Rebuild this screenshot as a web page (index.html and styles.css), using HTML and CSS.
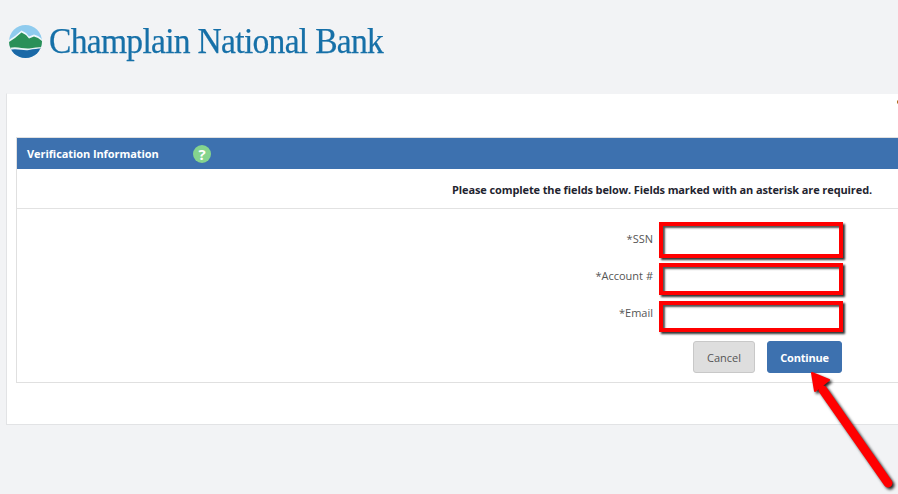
FILE: index.html
```
<!DOCTYPE html>
<html lang="en">
<head>
<meta charset="utf-8">
<title>Champlain National Bank</title>
<link rel="stylesheet" href="styles.css">
</head>
<body>
<header class="brand">
  <svg class="brand-mark" viewBox="0 0 33 33" width="33" height="33" aria-hidden="true">
    <defs><clipPath id="disc"><circle cx="16.5" cy="16.5" r="16.5"/></clipPath></defs>
    <g clip-path="url(#disc)">
      <rect width="33" height="33" fill="#8fcbee"/>
      <path d="M0 15 L6 11 L12.5 5.5 L17 8 L20 11.5 L25 9.5 L29 11 L33 14 V26 H0Z" fill="#fff" opacity=".85"/>
      <path d="M0 17 L6 13 L12.5 7.5 L17 10 L20 13.5 L25 11.5 L29 13 L33 16 V24 H0Z" fill="#2a9058"/>
      <path d="M0 23 C8 21 14 24 20 23.5 C25 23 29 22 33 22 V26 H0Z" fill="#e9f3f5"/>
      <path d="M0 25 C8 23 14 26 20 25 C25 24 29 23.5 33 23.5 V33 H0Z" fill="#1a68a6"/>
    </g>
  </svg>
  <span class="brand-name">Champlain National Bank</span>
</header>
<main class="card">
  <span class="dot"></span>
  <section class="panel">
    <div class="panel-head">
      <h1 class="panel-title">Verification Information</h1>
      <span class="help">?</span>
    </div>
    <p class="notice">Please complete the fields below. Fields marked with an asterisk are required.</p>
    <form class="fields">
      <div class="row row-ssn">
        <label class="label label-ssn" for="ssn">*SSN</label>
        <input class="input input-ssn" id="ssn" type="text">
      </div>
      <div class="row row-account">
        <label class="label label-low" for="acct">*Account #</label>
        <input class="input input-account" id="acct" type="text">
      </div>
      <div class="row row-email">
        <label class="label label-low" for="email">*Email</label>
        <input class="input input-email" id="email" type="text">
      </div>
      <div class="actions">
        <button class="btn btn-cancel" type="button">Cancel</button>
        <button class="btn btn-continue" type="button">Continue</button>
      </div>
    </form>
  </section>
  <svg class="arrow" viewBox="0 0 90 118" width="90" height="118" aria-hidden="true">
    <path d="M79 113 L14 20" stroke="#f00" stroke-width="9" stroke-linecap="round" fill="none"/>
    <path d="M3 3 L20 10 L6 21Z" fill="#f00" stroke="#f00" stroke-width="2" stroke-linejoin="round"/>
  </svg>
</main>
</body>
</html>
```
FILE: styles.css
```
* { box-sizing: border-box; }
html, body { margin: 0; height: 494px; overflow: hidden; }
body { background: #f2f3f5; font-family: "Open Sans", "Liberation Sans", sans-serif; }

.brand { height: 93px; padding: 25px 0 0 9px; display: flex; align-items: flex-start; gap: 7px; }
.brand-mark { flex: none; filter: blur(.4px); }
.brand-name {
  font-family: "Liberation Serif", serif;
  font-size: 36.5px;
  line-height: 31px;
  letter-spacing: -.78px;
  transform: scaleX(.92);
  transform-origin: left center;
  -webkit-text-stroke: .25px #1670a8;
  color: #1670a8;
  white-space: nowrap;
}

.card {
  position: relative;
  margin-left: 6px;
  height: 332px;
  background: #fff;
  border: 1px solid #e2e3e5;
  border-top: 1px solid #f2f3f5;
  border-right: 0;
  padding: 43px 0 0 9px;
}
.dot {
  position: absolute;
  left: 890px;
  top: 6px;
  width: 3px;
  height: 4px;
  border-radius: 50%;
  background: #a8650f;
}
.panel { height: 246px; border: 1px solid #e0e0e0; border-right: 0; }
.panel-head {
  height: 31px;
  background: #3d71af;
  display: flex;
  align-items: center;
  padding-left: 10px;
}
.panel-title { margin: 0; width: 166px; font-size: 11px; font-weight: 700; letter-spacing: -.08px; line-height: 30px; color: #fff; white-space: nowrap; }
.help {
  width: 18px;
  height: 18px;
  border-radius: 50%;
  background: #85d48e;
  color: #fff;
  font-size: 15px;
  font-weight: 700;
  line-height: 18px;
  text-align: center;
}
.notice {
  margin: 0;
  height: 40px;
  padding: 13px 0 0 435px;
  font-size: 11px;
  font-weight: 700;
  line-height: 16px;
  letter-spacing: -.11px;
  color: #1f2430;
  border-bottom: 1px solid #e2e2e2;
  white-space: nowrap;
}
.fields { padding: 13px 0 0 0; }
.row { display: flex; align-items: flex-start; }
.row-account { margin-top: 5px; }
.row-email { margin-top: 6px; margin-left: -1px; }
.label {
  width: 636px;
  flex: none;
  text-align: right;
  font-size: 11px;
  line-height: 16px;
  color: #555;
}
.label-ssn { padding-top: 9px; }
.label-low { padding-top: 5px; }
.row-email .label { width: 637px; padding-top: 4px; }
.input {
  display: block;
  width: 184px;
  margin-left: 6px;
  background: #fff;
  border: 4px solid #f00;
  outline: 0;
  padding: 0;
  box-shadow: 2px 2px 2px #333, inset 2px 2px 2px #555;
}
.input-ssn { height: 36px; }
.input-account { height: 32px; }
.input-email { height: 31px; }

.actions { display: flex; gap: 12px; margin: 9px 0 0 676px; }
.btn {
  height: 32px;
  border-radius: 3px;
  font-family: inherit;
  font-size: 11px;
  padding: 0;
}
.btn-cancel { width: 62px; background: #dedede; border: 1px solid #c8c8c8; color: #555; }
.btn-continue { width: 75px; background: #3d71af; border: 1px solid #3d71af; color: #fff; font-weight: 700; letter-spacing: -.2px; }

.arrow {
  position: absolute;
  left: 802px;
  top: 276px;
  filter: drop-shadow(2px 2px 1.5px #222);
}
```
